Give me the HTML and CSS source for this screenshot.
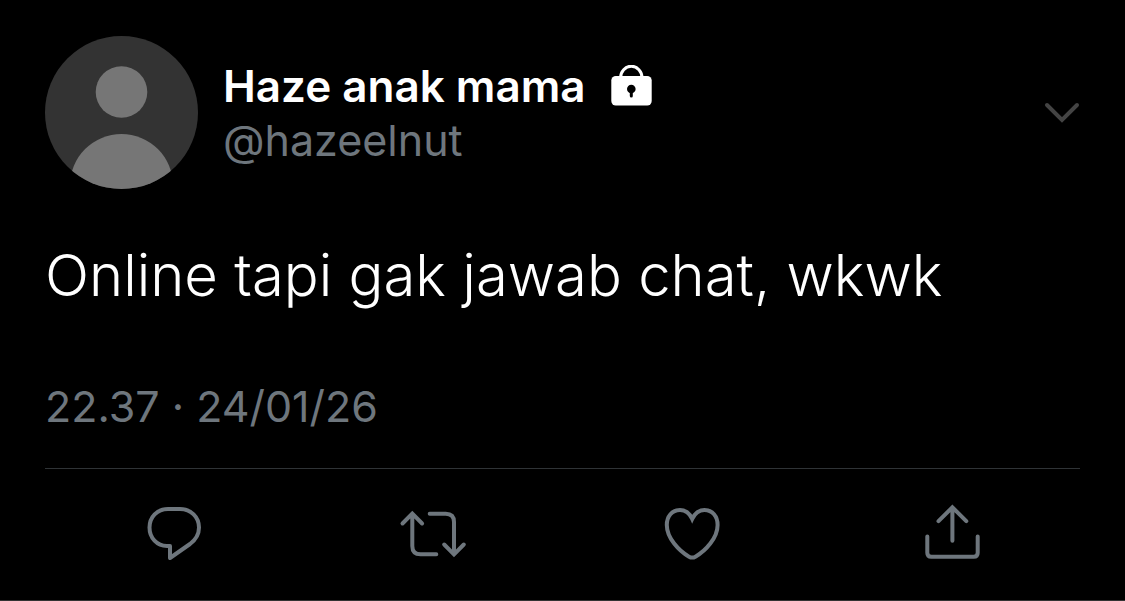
FILE: index.html
```html
<!DOCTYPE html>
<html lang="id">
<head>
  <meta charset="UTF-8" />
  <meta name="viewport" content="width=device-width, initial-scale=1.0"/>
  <title>Haze anak mama</title>
  <link rel="stylesheet" href="styles.css">
</head>
<body>
  <article class="tweet">
    <!-- Author -->
    <header class="tweet-header">
      <svg class="avatar" viewBox="0 0 153 153" aria-hidden="true">
        <defs>
          <clipPath id="avatar-clip"><circle cx="76.5" cy="76.5" r="76.5"/></clipPath>
        </defs>
        <g clip-path="url(#avatar-clip)">
          <rect width="153" height="153" fill="#333333"/>
          <circle cx="76.5" cy="56" r="25.8" fill="#767676"/>
          <circle cx="76.5" cy="149.5" r="51.5" fill="#767676"/>
        </g>
      </svg>
      <div class="author">
        <div class="name-row">
          <span class="name">Haze anak mama</span>
          <svg class="lock" viewBox="0 0 42 42" role="img" aria-label="Protected">
            <path d="M10.5 13a10.800 11.800 0 0 1 21.600 0" fill="none" stroke="#fff" stroke-width="3"/>
            <rect x="1.300" y="11" width="40.400" height="29.500" rx="4.500" fill="#fff"/>
            <circle cx="21.300" cy="24" r="4.300" fill="#000"/>
            <path d="M21.300 25v6" stroke="#000" stroke-width="3" stroke-linecap="round"/>
          </svg>
        </div>
        <a class="handle" href="#">@hazeelnut</a>
      </div>
      <button class="more" type="button" aria-label="More">
        <svg viewBox="0 0 36 24"><path d="M3 4l15 15L33 4"/></svg>
      </button>
    </header>

    <p class="text">Online tapi gak jawab chat, wkwk</p>
    <time class="date" datetime="2026-01-24T22:37">22.37 · 24/01/26</time>

    <!-- Actions -->
    <div class="actions">
      <button type="button" aria-label="Reply">
        <svg viewBox="0 0 80 64"><path stroke-linejoin="round" d="M36 57V45H33C23 45 15.500 37 15.500 26.500C15.500 16 23 8 34 8H46C57 8 65 16 65 26.500C65 33 62 38.500 56 43Z"/></svg>
      </button>
      <button type="button" aria-label="Retweet">
        <svg viewBox="0 0 80 64"><path d="M9.500 22.500l9.800-9.800 9.800 9.800M19.300 13v32q0 8.300 8.300 8.300h15.700M36.700 12.700h16q8.300 0 8.300 8.300v32M51.200 43.500l9.800 9.800 9.800-9.800"/></svg>
      </button>
      <button type="button" aria-label="Like">
        <svg viewBox="0 0 80 64"><path d="M40.200 18C37.500 12 33 9 28 9C20 9 14.800 15.500 14.800 24C14.800 37 27 50 37 55.700Q40.200 57.500 43.400 55.700C53.500 50 65.600 37 65.600 24C65.600 15.500 60.500 9 52.400 9C47.500 9 43 12 40.200 18Z"/></svg>
      </button>
      <button type="button" aria-label="Share">
        <svg viewBox="0 0 80 64"><path d="M27.500 20.200l13.900-13.900 13.900 13.900M41.400 7v32.700M16.300 35.500v16.200q0 4 4 4h42.400q4 0 4-4V35.500"/></svg>
      </button>
    </div>
  </article>
</body>
</html>
```

FILE: styles.css
```css
* {
  box-sizing: border-box;
}
body {
  margin: 0;
  background: #000;
  color: #fff;
  font-family: Inter, "Liberation Sans", sans-serif;
}
button {
  padding: 0;
  border: none;
  background: none;
  cursor: pointer;
}
svg {
  display: block;
}
.tweet {
  padding: 36px 45px 35px;
  border-bottom: 1px solid #333;
}
.tweet-header {
  display: flex;
  align-items: center;
  gap: 25px;
}
.avatar {
  width: 153px;
  height: 153px;
}
.author {
  flex: 1;
}
.name-row {
  display: flex;
  align-items: center;
  gap: 24px;
}
.name {
  font-size: 44px;
  font-weight: 600;
  line-height: 54px;
}
.lock {
  width: 42px;
  height: 42px;
}
.handle {
  display: block;
  color: #6e767d;
  font-size: 43px;
  line-height: 54px;
  text-decoration: none;
}
.more svg {
  width: 36px;
  height: 24px;
  fill: none;
  stroke: #444;
  stroke-width: 4;
  stroke-linecap: round;
}
.text {
  margin: 48px 0 66px;
  font-size: 58px;
  font-weight: 300;
  line-height: 76px;
}
.date {
  display: block;
  color: #6e767d;
  font-size: 43px;
  line-height: 54px;
}
.actions {
  display: grid;
  grid-template-columns: repeat(4, 1fr);
  justify-items: center;
  margin-top: 35px;
  padding-top: 32px;
  border-top: 1px solid #2f3336;
}
.actions svg {
  width: 80px;
  height: 64px;
  fill: none;
  stroke: #6e767d;
  stroke-width: 4;
  stroke-linecap: round;
}
```
